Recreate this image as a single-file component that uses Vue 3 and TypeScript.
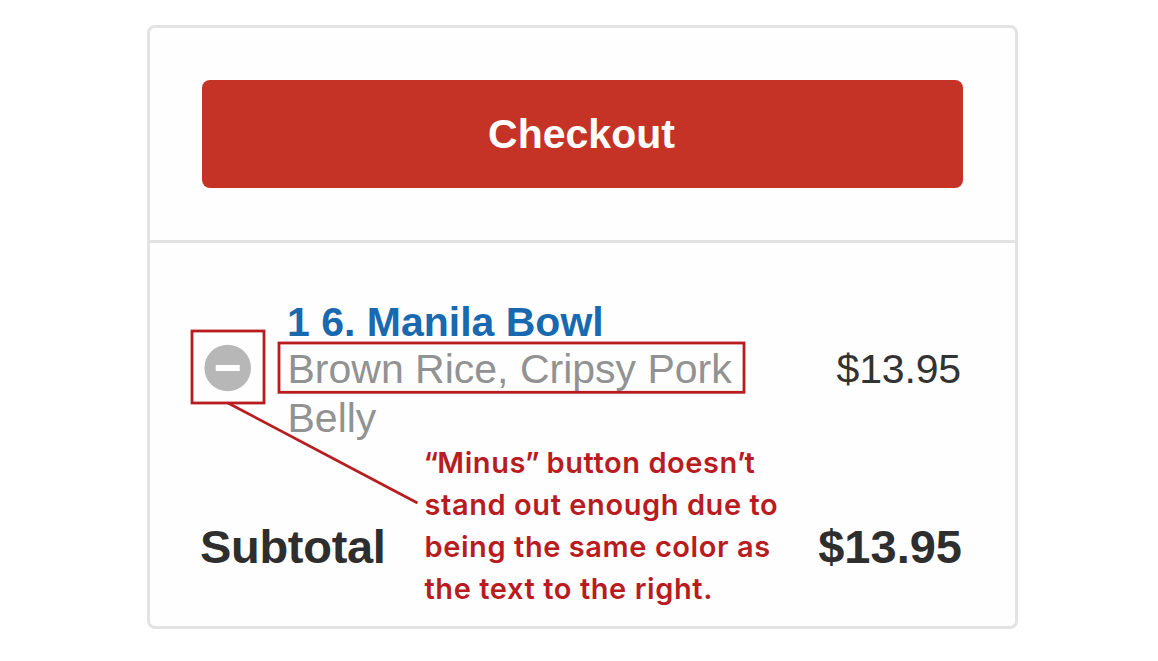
<script setup lang="ts">
interface CartItem {
  name: string
  options: string
  price: string
}

const item: CartItem = {
  name: '1 6. Manila Bowl',
  options: 'Brown Rice, Cripsy Pork Belly',
  price: '$13.95',
}
const subtotal: string = '$13.95'
const noteLines: string[] = [
  'stand out enough due to',
  'being the same color as',
  'the text to the right.',
]
</script>

<template>
  <main class="page">
    <section class="card">
      <div class="checkout-area">
        <button class="checkout" type="button">Checkout</button>
      </div>
      <div class="item">
        <button class="minus" type="button" aria-label="Remove item">
          <svg width="48" height="48" viewBox="0 0 48 48">
            <circle cx="23.700" cy="24" r="23.3" fill="#b7b7b7" />
            <rect x="11.700" y="21" width="24" height="6" fill="#fff" />
          </svg>
        </button>
        <div class="details">
          <div class="name">{{ item.name }}</div>
          <div class="options">{{ item.options }}</div>
        </div>
        <div class="price">{{ item.price }}</div>
      </div>
      <div class="subtotal">
        <span class="label">Subtotal</span>
        <span>{{ subtotal }}</span>
      </div>
    </section>

    <svg class="marks" width="1158" height="661" viewBox="0 0 1158 661">
      <g fill="none" stroke="#b91c1f" stroke-width="2.8">
        <rect x="192" y="331" width="72" height="72" />
        <rect x="279" y="343" width="465" height="49.3" />
        <path d="M228 403L417.500 503" />
      </g>
    </svg>
    <div class="note">
      <div><span class="quote">“</span>Minus<span class="quote">”</span> button doesn<span class="quote">’</span>t</div>
      <div v-for="line in noteLines" :key="line">{{ line }}</div>
    </div>
  </main>
</template>

<style>
body {
  margin: 0;
  background: #fff;
}
</style>

<style scoped>
.page {
  position: relative;
  box-sizing: border-box;
  width: 1158px;
  height: 661px;
  padding: 25px 0 0 147px;
  overflow: hidden;
  background: #fff;
  font-family: "Liberation Sans", Arial, sans-serif;
}
.card {
  box-sizing: border-box;
  width: 871px;
  height: 604px;
  border: 3px solid #e3e3e3;
  border-radius: 8px;
  background: #fefefe;
}
.checkout-area {
  box-sizing: border-box;
  height: 215px;
  padding: 52.400px 51.700px 0;
  border-bottom: 3px solid #e3e3e3;
}
.checkout {
  display: block;
  width: 100%;
  height: 107.400px;
  padding: 0 2px 0 0;
  border: 0;
  border-radius: 8px;
  background: #c53327;
  color: #fff;
  font: bold 41px/106px "Liberation Sans", Arial, sans-serif;
}
.item {
  display: flex;
  height: 144px;
  padding: 56px 54px 0 54px;
  font-size: 41px;
}
.minus {
  display: block;
  width: 48px;
  height: 48px;
  margin-top: 45px;
  padding: 0;
  border: 0;
  background: none;
}
.minus svg {
  display: block;
}
.details {
  width: 460px;
  margin-left: 35px;
}
.name {
  line-height: 46px;
  font-weight: bold;
  color: #1969b0;
}
.options {
  padding-left: 0.500px;
  line-height: 49px;
  color: #929292;
}
.price {
  margin: 45px 0 0 auto;
  line-height: 50px;
  letter-spacing: -0.150px;
  color: #333;
}
.subtotal {
  display: flex;
  justify-content: space-between;
  padding: 74px 53px 0 50px;
  font-size: 47px;
  font-weight: bold;
  line-height: 60px;
  color: #2e2e2e;
}
.label {
  letter-spacing: -0.300px;
}
.marks {
  position: absolute;
  top: 0;
  left: 0;
}
.note {
  position: absolute;
  top: 442px;
  left: 424.500px;
  font: 600 29px/42px Inter, sans-serif;
  letter-spacing: 0.580px;
  white-space: nowrap;
  color: #b91c1f;
}
.quote {
  margin-left: -1px;
  letter-spacing: -0.900px;
}
</style>
